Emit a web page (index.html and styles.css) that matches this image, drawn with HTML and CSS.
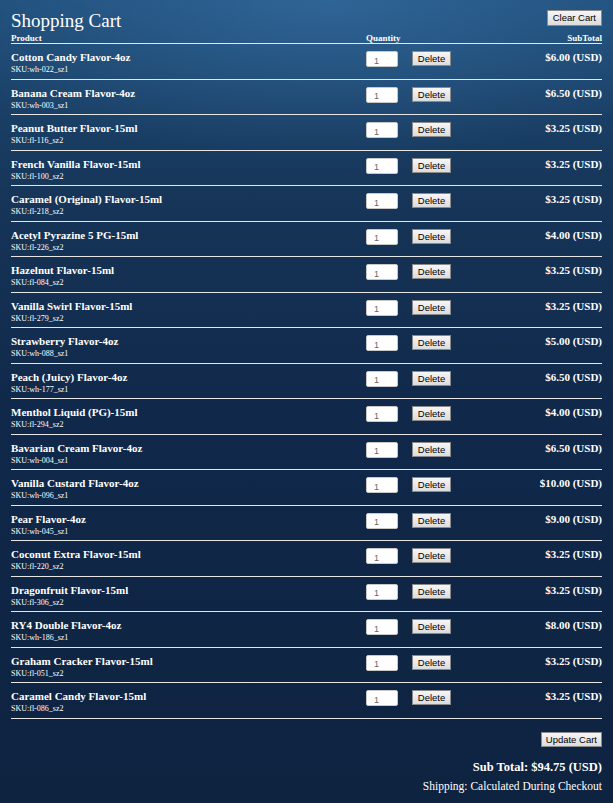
FILE: index.html
```html
<!DOCTYPE html>
<html lang="en">
<head>
    <meta charset="UTF-8">
    <meta name="viewport" content="width=device-width, initial-scale=1.0">
    <title>Shopping Cart</title>
    <link rel="stylesheet" href="styles.css">
</head>
<body>
    <div class="cart">
        <div class="cart-top">
            <h1>Shopping Cart</h1>
            <button class="btn btn-clear">Clear Cart</button>
        </div>
        <table class="cart-table">
            <thead>
                <tr>
                    <th class="col-product">Product</th>
                    <th class="col-qty">Quantity</th>
                    <th class="col-total">SubTotal</th>
                </tr>
            </thead>
            <tbody id="cartItems">
                <!-- filled by the script below -->
            </tbody>
        </table>
        <div class="cart-bottom">
            <button class="btn btn-update">Update Cart</button>
            <div class="sub-total">Sub Total: $94.75 (USD)</div>
            <div class="shipping">Shipping: Calculated During Checkout</div>
        </div>
    </div>

    <script>
        const items = [
            ['Cotton Candy Flavor-4oz', 'wh-022_sz1', '6.00'],
            ['Banana Cream Flavor-4oz', 'wh-003_sz1', '6.50'],
            ['Peanut Butter Flavor-15ml', 'fl-116_sz2', '3.25'],
            ['French Vanilla Flavor-15ml', 'fl-100_sz2', '3.25'],
            ['Caramel (Original) Flavor-15ml', 'fl-218_sz2', '3.25'],
            ['Acetyl Pyrazine 5 PG-15ml', 'fl-226_sz2', '4.00'],
            ['Hazelnut Flavor-15ml', 'fl-084_sz2', '3.25'],
            ['Vanilla Swirl Flavor-15ml', 'fl-279_sz2', '3.25'],
            ['Strawberry Flavor-4oz', 'wh-088_sz1', '5.00'],
            ['Peach (Juicy) Flavor-4oz', 'wh-177_sz1', '6.50'],
            ['Menthol Liquid (PG)-15ml', 'fl-294_sz2', '4.00'],
            ['Bavarian Cream Flavor-4oz', 'wh-004_sz1', '6.50'],
            ['Vanilla Custard Flavor-4oz', 'wh-096_sz1', '10.00'],
            ['Pear Flavor-4oz', 'wh-045_sz1', '9.00'],
            ['Coconut Extra Flavor-15ml', 'fl-220_sz2', '3.25'],
            ['Dragonfruit Flavor-15ml', 'fl-306_sz2', '3.25'],
            ['RY4 Double Flavor-4oz', 'wh-186_sz1', '8.00'],
            ['Graham Cracker Flavor-15ml', 'fl-051_sz2', '3.25'],
            ['Caramel Candy Flavor-15ml', 'fl-086_sz2', '3.25']
        ];

        const tbody = document.getElementById('cartItems');
        items.forEach(item => {
            const row = tbody.insertRow();
            row.innerHTML =
                '<td class="col-product"><div class="item-name">' + item[0] + '</div>' +
                '<div class="item-sku">SKU:' + item[1] + '</div></td>' +
                '<td class="col-qty"><input class="qty" type="text" value="1">' +
                '<button class="btn btn-delete">Delete</button></td>' +
                '<td class="col-total">$' + item[2] + ' (USD)</td>';
        });
    </script>
</body>
</html>
```

FILE: styles.css
```css
html {
    min-height: 100%;
    background: #0f2441;
}
body {
    margin: 0;
    min-height: 803px;
    font-family: "Liberation Serif", "Times New Roman", serif;
    color: #fff;
    background:
        radial-gradient(ellipse 420px 160px at 330px 0, rgba(60, 120, 175, 0.55), rgba(60, 120, 175, 0) 100%),
        linear-gradient(to bottom, #1f4d78 0, #163558 200px, #10284a 420px, #0e2340 803px);
}
.cart {
    padding: 0 11px;
}
.cart-top {
    display: flex;
    justify-content: space-between;
    align-items: flex-start;
    height: 33px;
}
h1 {
    margin: 10px 0 0;
    font-size: 19px;
    font-weight: normal;
    line-height: 22px;
}
.btn {
    font-family: "Liberation Sans", Arial, sans-serif;
    font-size: 9.5px;
    color: #000;
    background: linear-gradient(to bottom, #f6f6f6, #dcdcdc);
    border: 1px solid #8a8a8a;
    border-radius: 0;
    padding: 0 5px;
    height: 16px;
    line-height: 14px;
    cursor: pointer;
}
.btn-clear {
    margin-top: 10px;
}
.cart-table {
    width: 100%;
    border-collapse: collapse;
    table-layout: fixed;
}
th {
    font-size: 9px;
    font-weight: bold;
    height: 10px;
    padding: 0;
    line-height: 10px;
    vertical-align: bottom;
    border-bottom: 1px solid #e6e6e6;
}
td {
    height: 35.5px;
    padding: 0;
    vertical-align: top;
    border-bottom: 1px solid #e6e6e6;
    box-sizing: border-box;
}
.col-product {
    width: 355px;
    text-align: left;
}
.col-qty {
    width: 130px;
    text-align: left;
}
.col-total {
    text-align: right;
}
td.col-product,
td.col-total {
    padding-top: 6px;
    font-size: 11px;
    font-weight: bold;
    line-height: 14px;
}
.item-name {
    font-size: 11px;
    font-weight: bold;
    line-height: 14px;
}
.item-sku {
    font-size: 8px;
    font-weight: normal;
    line-height: 10px;
    margin-top: 1px;
}
td.col-qty {
    padding-top: 7px;
}
.qty {
    width: 32px;
    height: 16px;
    box-sizing: border-box;
    border: 1px solid #c8c8c8;
    border-radius: 2px;
    padding: 3px 0 0 7px;
    font-family: "Liberation Sans", Arial, sans-serif;
    font-size: 9px;
    color: #666;
    vertical-align: top;
    margin: 0;
}
.btn-delete {
    margin: 0 0 0 14px;
    height: 15px;
    width: 39px;
    padding: 0;
    vertical-align: top;
}
.cart-bottom {
    display: flex;
    flex-direction: column;
    align-items: flex-end;
}
.btn-update {
    margin-top: 13px;
    height: 15px;
    padding: 0 4px;
}
.sub-total {
    margin-top: 11px;
    font-size: 12.5px;
    font-weight: bold;
    line-height: 18px;
}
.shipping {
    margin-top: 1px;
    font-size: 11.5px;
    line-height: 18px;
}
```
